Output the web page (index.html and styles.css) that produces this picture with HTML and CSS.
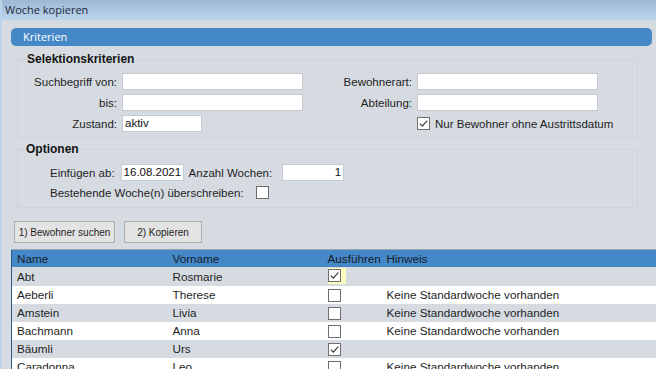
FILE: index.html
```html
<!DOCTYPE html>
<html lang="de">
<head>
  <meta charset="UTF-8">
  <title>Woche kopieren</title>
  <link rel="stylesheet" href="styles.css">
</head>
<body>
<div class="window">
  <div class="titlebar">Woche kopieren</div>
  <div class="main">
    <div class="bar">Kriterien</div>

    <fieldset class="group">
      <legend>Selektionskriterien</legend>
      <div class="criteria">
        <label class="lbl">Suchbegriff von:</label><span class="field"></span>
        <label class="lbl">Bewohnerart:</label><span class="field"></span>
        <label class="lbl">bis:</label><span class="field"></span>
        <label class="lbl">Abteilung:</label><span class="field"></span>
        <label class="lbl">Zustand:</label><span class="field short">aktiv</span>
        <span></span>
        <span class="check-line">
          <span class="cb"><svg viewBox="0 0 11 11"><path d="M1.8 5.6 L4.3 8.1 L9.2 2.6" fill="none" stroke="#3a3a3a" stroke-width="1.2"/></svg></span>
          Nur Bewohner ohne Austrittsdatum
        </span>
      </div>
    </fieldset>

    <fieldset class="group options">
      <legend>Optionen</legend>
      <div class="opt-row">
        <span>Einfügen ab:</span>
        <span class="field date">16.08.2021</span>
        <span class="gap-left">Anzahl Wochen:</span>
        <span class="field num">1</span>
      </div>
      <div class="opt-row">
        <span>Bestehende Woche(n) überschreiben:</span>
        <span class="cb spaced"></span>
      </div>
    </fieldset>

    <div class="buttons">
      <button class="btn wide">1) Bewohner suchen</button>
      <button class="btn">2) Kopieren</button>
    </div>

    <table class="grid">
      <colgroup>
        <col class="c-name">
        <col class="c-vorname">
        <col class="c-run">
        <col>
      </colgroup>
      <thead>
        <tr><th>Name</th><th>Vorname</th><th>Ausführen</th><th>Hinweis</th></tr>
      </thead>
      <tbody>
        <tr class="odd">
          <td>Abt</td><td>Rosmarie</td>
          <td><span class="focus"><span class="cb"><svg viewBox="0 0 11 11"><path d="M1.8 5.6 L4.3 8.1 L9.2 2.6" fill="none" stroke="#3a3a3a" stroke-width="1.2"/></svg></span></span></td>
          <td></td>
        </tr>
        <tr>
          <td>Aeberli</td><td>Therese</td><td><span class="cb"></span></td><td>Keine Standardwoche vorhanden</td>
        </tr>
        <tr class="odd">
          <td>Amstein</td><td>Livia</td><td><span class="cb"></span></td><td>Keine Standardwoche vorhanden</td>
        </tr>
        <tr>
          <td>Bachmann</td><td>Anna</td><td><span class="cb"></span></td><td>Keine Standardwoche vorhanden</td>
        </tr>
        <tr class="odd">
          <td>Bäumli</td><td>Urs</td>
          <td><span class="cb"><svg viewBox="0 0 11 11"><path d="M1.8 5.6 L4.3 8.1 L9.2 2.6" fill="none" stroke="#3a3a3a" stroke-width="1.2"/></svg></span></td>
          <td></td>
        </tr>
        <tr>
          <td>Caradonna</td><td>Leo</td><td><span class="cb"></span></td><td>Keine Standardwoche vorhanden</td>
        </tr>
      </tbody>
    </table>
  </div>
</div>
</body>
</html>
```

FILE: styles.css
```css
* {
  padding: 0;
  margin: 0;
  box-sizing: border-box;
}

body {
  background-color: #d6dbe2;
  font-family: "Liberation Sans", Arial, sans-serif;
  font-size: 11.5px;
  color: #1e1e1e;
  overflow: hidden;
}

.window {
  border-left: 2px solid #bcd3ea;
  height: 369px;
}

.titlebar {
  height: 20px;
  padding-left: 3px;
  line-height: 20px;
  font-family: "Open Sans", "DejaVu Sans", sans-serif;
  font-size: 11px;
  color: #1c2a3a;
  background: linear-gradient(#9db6d4, #bdd6ee);
}

.main {
  padding: 8px 0 0 9px;
}

.bar {
  height: 18px;
  margin-right: 4px;
  padding-left: 12px;
  line-height: 18px;
  border-radius: 5px;
  background-color: #4588c7;
  font-family: "Open Sans", "DejaVu Sans", sans-serif;
  font-size: 11px;
  color: #fff;
}

.group {
  margin: 6px 18px 0 6px;
  border: 1px solid #cdd3da;
  padding: 0 0 5px 0;
}

.group legend {
  margin-left: 9px;
  padding: 0;
  font-size: 12px;
  font-weight: bold;
  line-height: 15px;
  color: #141414;
}

.criteria {
  display: grid;
  grid-template-columns: 99px 181px 104px 181px;
  column-gap: 5px;
  row-gap: 4px;
  align-items: center;
  padding-top: 6px;
}

.lbl {
  text-align: right;
  white-space: nowrap;
}

.field {
  display: block;
  height: 17px;
  padding: 0 2px;
  line-height: 15px;
  background-color: #fff;
  border: 1px solid #c8ccd2;
  color: #111;
}

.field.short {
  width: 80px;
}

.check-line {
  display: flex;
  align-items: center;
  gap: 5px;
  height: 17px;
  white-space: nowrap;
}

.cb {
  display: inline-block;
  width: 13px;
  height: 13px;
  background-color: #fff;
  border: 1px solid #6f6f6f;
  vertical-align: middle;
}

.cb svg {
  display: block;
  width: 11px;
  height: 11px;
}

.options {
  margin-top: 4px;
  padding: 0 0 6px 0;
}

.options legend {
  margin-left: 8px;
}

.opt-row {
  display: flex;
  align-items: center;
  height: 17px;
  padding-left: 32px;
  white-space: nowrap;
}

.opt-row:first-of-type {
  margin-top: 7px;
}

.opt-row + .opt-row {
  margin-top: 3px;
}

.field.date {
  width: 63px;
  margin-left: 6px;
}

.gap-left {
  margin-left: 5px;
}

.field.num {
  width: 62px;
  margin-left: 10px;
  text-align: right;
}

.cb.spaced {
  margin-left: 12px;
}

.buttons {
  display: flex;
  gap: 9px;
  margin: 13px 0 0 3px;
}

.btn {
  height: 22px;
  width: 78px;
  padding: 0;
  background-color: #e3e3e3;
  border: 1px solid #adadad;
  font-family: "Liberation Sans", Arial, sans-serif;
  font-size: 10px;
  color: #1e1e1e;
  white-space: nowrap;
}

.btn.wide {
  width: 101px;
}

.grid {
  width: 645px;
  margin-top: 6px;
  border-collapse: collapse;
  table-layout: fixed;
  border-left: 1px solid #2f5d8a;
  border-top: 1px solid #9aa5b1;
  font-size: 11.7px;
}

.c-name { width: 156px; }
.c-vorname { width: 155px; }
.c-run { width: 59px; }

.grid th {
  height: 17px;
  padding-left: 5px;
  text-align: left;
  font-weight: normal;
  background-color: #4588c7;
  color: #15202c;
  white-space: nowrap;
}

.grid td {
  height: 18px;
  padding-left: 5px;
  background-color: #fff;
  white-space: nowrap;
}

.grid tr.odd td {
  background-color: #d6dbe2;
}

.focus {
  display: inline-block;
  padding: 1px 5px 2px 0;
  margin-top: 1px;
  background-color: #ffffc4;
}

.focus .cb {
  display: block;
}
```
